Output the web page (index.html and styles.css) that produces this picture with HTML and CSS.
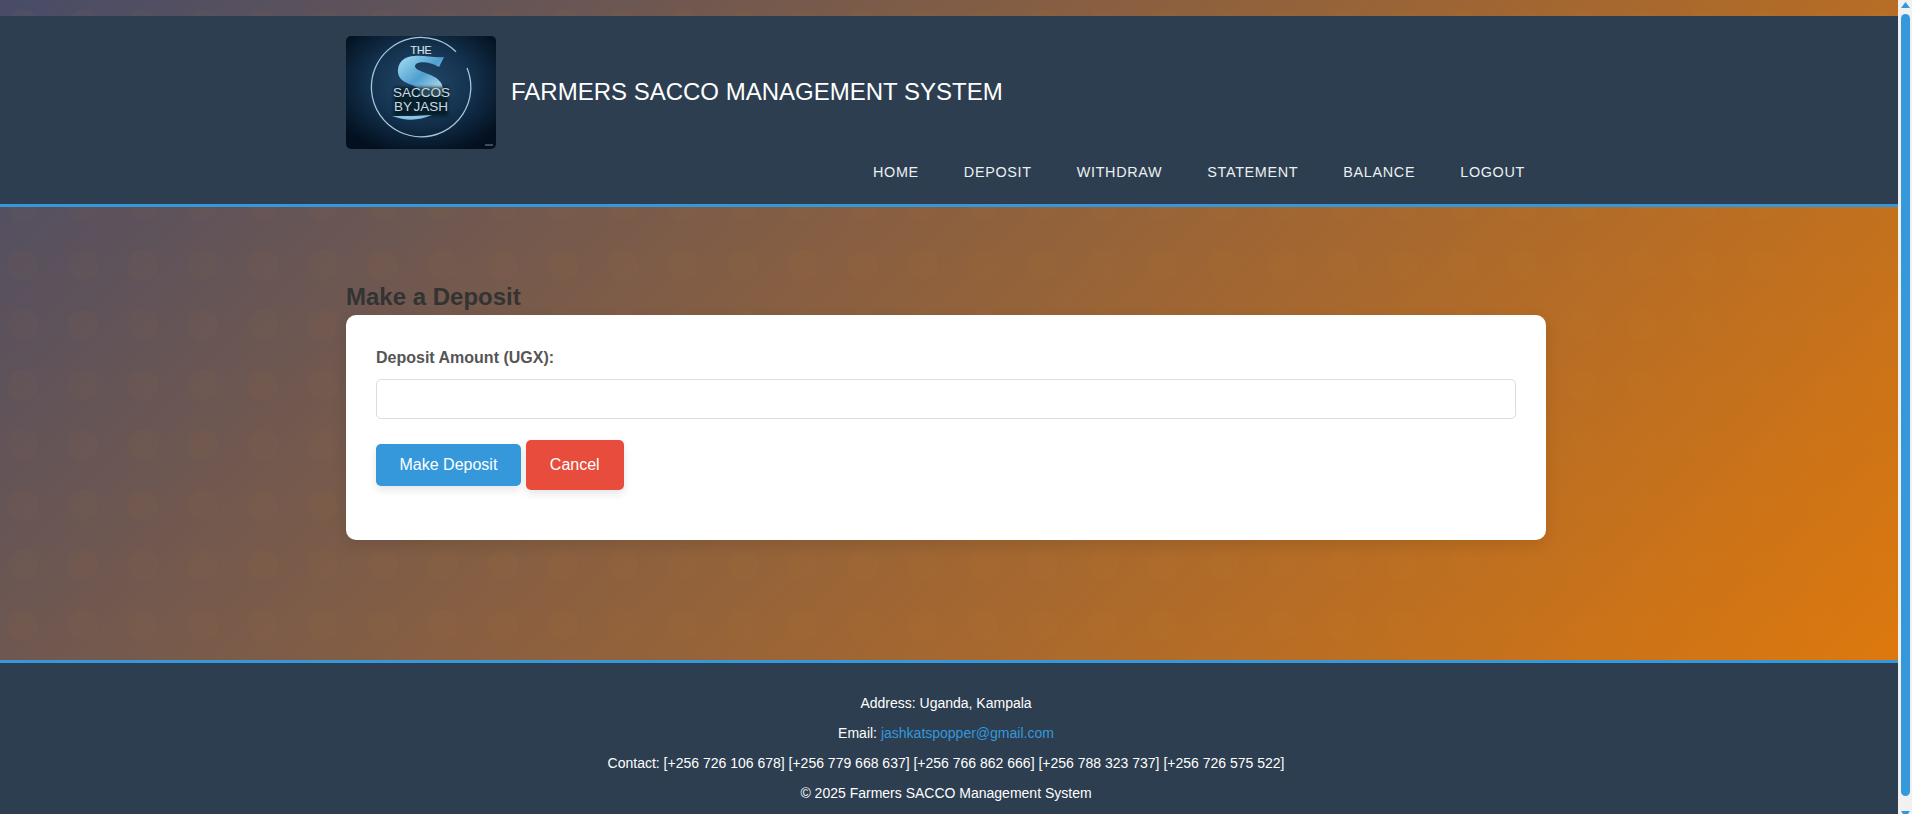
FILE: index.html
```html
<!DOCTYPE html>
<html lang="en">
<head>
<meta charset="utf-8">
<title>Make a Deposit</title>
<link rel="stylesheet" href="styles.css">
</head>
<body>
<div class="page">
<header class="site-header">
  <div class="header-inner">
    <div class="brand">
      <svg class="logo" viewBox="0 0 150 113" width="150" height="113" role="img" aria-label="The Saccos by Jash logo">
        <defs>
          <radialGradient id="bg" cx="50%" cy="42%" r="65%">
            <stop offset="0" stop-color="#24486b"/>
            <stop offset=".5" stop-color="#143350"/>
            <stop offset="1" stop-color="#03101f"/>
          </radialGradient>
          <linearGradient id="sg" x1="0" y1="0" x2="1" y2="1">
            <stop offset="0" stop-color="#a6e0f5"/>
            <stop offset=".5" stop-color="#4f9fcf"/>
            <stop offset="1" stop-color="#d3eef7"/>
          </linearGradient>
          <filter id="soft" x="-20%" y="-20%" width="140%" height="140%"><feGaussianBlur stdDeviation="1.500"/></filter>
        </defs>
        <rect width="150" height="113" rx="5" fill="url(#bg)"/>
        <path d="M110 15.700A49.700 49.700 0 1 0 121 32" fill="none" stroke="#a3c6d8" stroke-width="1.300"/>
        <path d="M98 21L93 31C85 26 74 25 70 28C66 32 74 35 82 38C91 41 97 46 97 54L96 60L70 60C76 56 74 52 66 49C56 46 51 41 52 33C53 25 60 20 68 20C78 19 88 22 98 21Z" fill="url(#sg)"/>
        <rect x="48" y="51" width="54" height="29" fill="#04121f" opacity=".72" filter="url(#soft)"/>
        <text class="logo-the" x="75" y="17.500">THE</text>
        <text class="logo-text" x="75.500" y="61">SACCOS</text>
        <text class="logo-text logo-by" x="75" y="75">BY JASH</text>
        <path d="M46 80C60 85 72 85 86 79C74 80 60 80 46 80Z" fill="#86c5e8"/>
        <rect x="139" y="108" width="8" height="2" fill="#3c4c58"/>
      </svg>
      <h1 class="site-title">FARMERS SACCO MANAGEMENT SYSTEM</h1>
    </div>
    <nav class="main-nav">
      <a href="#">Home</a>
      <a href="#">Deposit</a>
      <a href="#">Withdraw</a>
      <a href="#">Statement</a>
      <a href="#">Balance</a>
      <a href="#">Logout</a>
    </nav>
  </div>
</header>
<main class="content">
  <div class="content-inner">
    <h2 class="page-title">Make a Deposit</h2>
    <form class="card">
      <label class="field-label" for="amount">Deposit Amount (UGX):</label>
      <input class="field-input" id="amount" type="text">
      <div class="actions">
        <button class="btn btn-primary" type="button">Make Deposit</button>
        <a class="btn btn-cancel" href="#">Cancel</a>
      </div>
    </form>
  </div>
</main>
<footer class="site-footer">
  <p>Address: Uganda, Kampala</p>
  <p>Email: <a href="#">jashkatspopper@gmail.com</a></p>
  <p>Contact: [+256 726 106 678] [+256 779 668 637] [+256 766 862 666] [+256 788 323 737] [+256 726 575 522]</p>
  <p>© 2025 Farmers SACCO Management System</p>
</footer>
</div>
<aside class="scrollbar" aria-hidden="true">
  <svg class="scroll-up" viewBox="0 0 9 6" width="9" height="6"><path d="M4.500 0L9 6H0Z"/></svg>
  <div class="scroll-thumb"></div>
  <svg class="scroll-down" viewBox="0 0 9 3" width="9" height="3"><path d="M0 0H9L7 3H2Z"/></svg>
</aside>
</body>
</html>
```
FILE: styles.css
```css
* { box-sizing: border-box; }
html { overflow: hidden; height: 814px; }
body {
  margin: 0;
  height: 814px;
  display: flex;
  overflow: hidden;
  background: #f1f1f1;
  font-family: "Liberation Sans", Arial, sans-serif;
  color: #333;
}
.page {
  flex: 1;
  min-width: 0;
  padding-top: 16px;
  background-image:
    radial-gradient(circle at 23px 25px, rgba(210, 140, 40, .03) 15px, transparent 15.5px),
    linear-gradient(135deg, #484c68 0%, #e67b08 100%);
  background-size: 60px 60px, 100% 100%;
}
.scrollbar { flex: none; width: 14px; padding: 2px 2px 0 3px; display: flex; flex-direction: column; }
.scrollbar svg { display: block; flex: none; fill: #3498db; }
.scroll-thumb { flex: none; height: 782px; margin: 6px 0 15px; border-radius: 5px; background: #3498db; }
.site-header {
  background: #2c3e50;
  border-bottom: 3px solid #3498db;
  height: 191px;
  padding-right: 6px;
}
.header-inner { width: 1200px; margin: 0 auto; padding-top: 20px; }
.brand { display: flex; align-items: center; gap: 15px; }
.logo { display: block; flex: none; }
.logo-the { font: 400 10.500px "Liberation Sans", sans-serif; fill: #d2e0e8; stroke: #d2e0e8; stroke-width: .2px; text-anchor: middle; }
.logo-text { font: 400 13.500px "Liberation Sans", sans-serif; fill: #c9d9e3; text-anchor: middle; }
.logo-by { word-spacing: -2px; }
.site-title { margin: 0 0 2px; font-size: 24px; font-weight: 400; color: #fff; }
.main-nav { display: flex; justify-content: flex-end; gap: 45px; margin-top: 12px; padding-right: 21px; }
.main-nav a { color: #ecf0f1; text-decoration: none; text-transform: uppercase; font-size: 14.4px; letter-spacing: .67px; line-height: 22px; }
.content { height: 453px; padding-top: 76px; padding-right: 6px; }
.content-inner { width: 1200px; margin: 0 auto; }
.page-title { margin: 0 0 5px; font-size: 24px; line-height: 27px; color: #333; }
.card { background: #fff; border-radius: 10px; padding: 30px; height: 225px; box-shadow: 0 5px 15px rgba(0,0,0,.1); }
.field-label { display: block; font-size: 16px; font-weight: 700; color: #555; line-height: 26px; margin-bottom: 8px; }
.field-input { display: block; width: 100%; height: 40px; border: 1.500px solid #ddd; border-radius: 5px; background: #fff; }
.actions { display: flex; align-items: center; gap: 5px; margin-top: 21px; }
.btn { display: block; font: 16px "Liberation Sans", sans-serif; color: #fff; text-decoration: none; border: 0; border-radius: 5px; padding: 0 23.500px; box-shadow: 0 4px 8px rgba(0,0,0,.1); }
.btn-primary { background: #3498db; height: 42px; line-height: 42px; }
.btn-cancel { background: #e74c3c; height: 50px; line-height: 50px; padding: 0 24px; }
.site-footer { background: #2c3e50; border-top: 3px solid #3498db; color: #fff; text-align: center; font-size: 14px; height: 154px; padding: 32px 6px 0 0; overflow: hidden; }
.site-footer p { margin: 0 0 14px; line-height: 16px; }
.site-footer a { color: #3498db; text-decoration: none; }
```
